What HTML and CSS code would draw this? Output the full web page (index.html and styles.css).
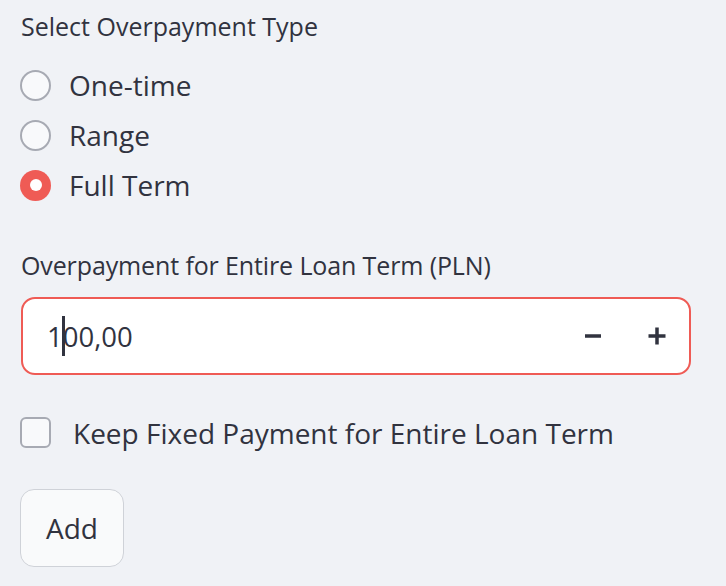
FILE: index.html
```html
<!DOCTYPE html>
<html>
<head>
<meta charset="utf-8">
<link rel="stylesheet" href="styles.css">
</head>
<body>
<div class="panel">
  <div class="label label-top">Select Overpayment Type</div>
  <div class="radio-group">
    <div class="radio-row">
      <span class="radio"></span>
      <span class="opt">One-time</span>
    </div>
    <div class="radio-row">
      <span class="radio"></span>
      <span class="opt">Range</span>
    </div>
    <div class="radio-row">
      <span class="radio radio-on"><span class="radio-dot"></span></span>
      <span class="opt">Full Term</span>
    </div>
  </div>

  <div class="label label-input">Overpayment for Entire Loan Term (PLN)</div>
  <div class="number-input">
    <div class="value">1<span class="caret"></span>00,00</div>
    <div class="step">
      <svg width="18" height="18" viewBox="0 0 18 18"><rect x="1" y="7.25" width="16" height="3.5" fill="#31333f"/></svg>
    </div>
    <div class="step">
      <svg width="18" height="18" viewBox="0 0 18 18"><rect x="0.5" y="7.25" width="17" height="3.5" fill="#31333f"/><rect x="7.25" y="0.5" width="3.5" height="17" fill="#31333f"/></svg>
    </div>
  </div>

  <div class="check-row">
    <span class="checkbox"></span>
    <span class="opt check-text">Keep Fixed Payment for Entire Loan Term</span>
  </div>

  <button class="btn">Add</button>
</div>
</body>
</html>
```
FILE: styles.css
```css
html, body {
  margin: 0;
  padding: 0;
  background: #f0f2f6;
}
body {
  font-family: "Open Sans", "Noto Sans", sans-serif;
  color: #31333f;
}
.panel {
  padding-left: 20px;
  display: flex;
  flex-direction: column;
  align-items: flex-start;
}
.label {
  font-size: 25px;
  height: 34px;
  display: flex;
  align-items: center;
  padding-left: 1px;
  white-space: nowrap;
}
.label-top {
  margin-top: 9px;
}
.radio-group {
  margin-top: 17px;
  display: flex;
  flex-direction: column;
}
.radio-row {
  height: 50px;
  display: flex;
  align-items: center;
}
.radio {
  box-sizing: border-box;
  width: 31px;
  height: 31px;
  border-radius: 50%;
  border: 2px solid #a7aab3;
  background: #f8f9fb;
  margin-right: 18px;
  display: flex;
  align-items: center;
  justify-content: center;
  flex: none;
}
.radio-on {
  border: none;
  background: #ef5b55;
}
.radio-dot {
  width: 12px;
  height: 12px;
  border-radius: 50%;
  background: #ffffff;
}
.opt {
  font-size: 28px;
  white-space: nowrap;
}
.label-input {
  margin-top: 38px;
  letter-spacing: -0.12px;
}
.number-input {
  box-sizing: border-box;
  margin-top: 15px;
  margin-left: 1px;
  width: 670px;
  height: 78px;
  border: 2px solid #ef5b55;
  border-radius: 14px;
  background: #ffffff;
  display: flex;
  align-items: center;
}
.value {
  flex: 1;
  font-size: 27.5px;
  padding-left: 24px;
  white-space: nowrap;
}
.caret {
  display: inline-block;
  width: 3px;
  height: 40px;
  background: #31333f;
  vertical-align: -9px;
  margin-left: -1px;
  margin-right: -2px;
}
.step {
  width: 64px;
  height: 100%;
  display: flex;
  align-items: center;
  justify-content: center;
}
.check-row {
  margin-top: 32px;
  height: 50px;
  display: flex;
  align-items: center;
}
.checkbox {
  box-sizing: border-box;
  width: 31px;
  height: 31px;
  border-radius: 6px;
  border: 2px solid #a7aab3;
  background: #f8f9fb;
  margin-right: 22px;
  flex: none;
}
.check-text {
  position: relative;
  top: 1px;
}
.btn {
  box-sizing: border-box;
  margin-top: 32px;
  width: 104px;
  height: 78px;
  border: 1.5px solid #cfd2d8;
  border-radius: 14px;
  background: #f9fafb;
  font-family: "Open Sans", "Noto Sans", sans-serif;
  font-size: 28px;
  color: #31333f;
  padding: 0;
  display: flex;
  align-items: center;
  justify-content: center;
}
```
